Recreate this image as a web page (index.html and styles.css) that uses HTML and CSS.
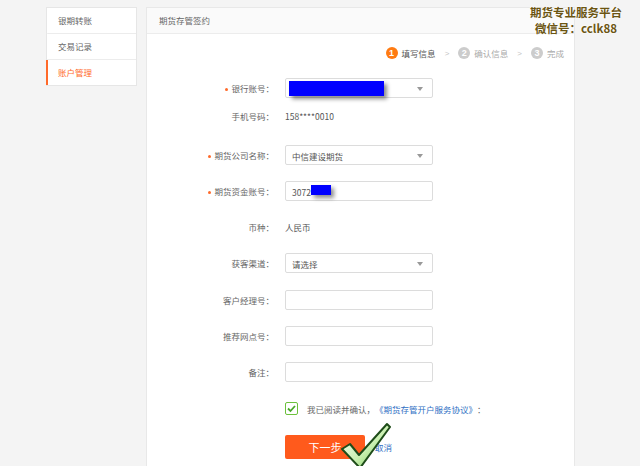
FILE: index.html
```html
<!DOCTYPE html>
<html lang="zh-CN">
<head>
  <meta charset="UTF-8">
  <title>期货存管签约</title>
  <link rel="stylesheet" href="styles.css">
</head>
<body>
  <div class="page">
    <!-- Sidebar -->
    <ul class="side-nav">
      <li>银期转账</li>
      <li>交易记录</li>
      <li class="active">账户管理</li>
    </ul>

    <!-- Main panel -->
    <div class="panel">
      <div class="panel-head">期货存管签约</div>

      <div class="steps">
        <span class="step current"><i>1</i>填写信息</span>
        <span class="arrow">&gt;</span>
        <span class="step"><i>2</i>确认信息</span>
        <span class="arrow">&gt;</span>
        <span class="step"><i>3</i>完成</span>
      </div>

      <div class="form">
        <div class="row">
          <label class="req">银行账号：</label>
          <div class="field select"><span class="mask mask-bank"></span></div>
        </div>
        <div class="row row-text tight">
          <label>手机号码：</label>
          <span class="value">158****0010</span>
        </div>
        <div class="row">
          <label class="req">期货公司名称：</label>
          <div class="field select">中信建设期货</div>
        </div>
        <div class="row">
          <label class="req">期货资金账号：</label>
          <div class="field">3072<span class="mask mask-acct"></span></div>
        </div>
        <div class="row row-text">
          <label>币种：</label>
          <span class="value">人民币</span>
        </div>
        <div class="row">
          <label>获客渠道：</label>
          <div class="field select">请选择</div>
        </div>
        <div class="row">
          <label>客户经理号：</label>
          <div class="field"></div>
        </div>
        <div class="row">
          <label>推荐网点号：</label>
          <div class="field"></div>
        </div>
        <div class="row">
          <label>备注：</label>
          <div class="field"></div>
        </div>
        <div class="row agree">
          <label></label>
          <div class="agree-box">
            <span class="checkbox">
              <svg width="11" height="11" viewBox="0 0 11 11"><path d="M2 5.5 L4.5 8 L9 3" fill="none" stroke="#4aa82a" stroke-width="1.8"/></svg>
            </span>
            我已阅读并确认，<a href="#">《期货存管开户服务协议》</a>：
          </div>
        </div>
        <div class="row actions">
          <label></label>
          <div class="btns">
            <button class="btn-next">下一步</button>
            <a href="#" class="cancel">取消</a>
          </div>
        </div>
      </div>

      <!-- big green tick stamped over the button -->
      <svg class="tick" width="52" height="48" viewBox="0 0 52 48">
        <defs>
          <linearGradient id="tg" x1="0" y1="0" x2="1" y2="1">
            <stop offset="0" stop-color="#ffffff"/>
            <stop offset="0.55" stop-color="#c9f0b0"/>
            <stop offset="1" stop-color="#5fbf3a"/>
          </linearGradient>
        </defs>
        <path d="M2 27 L10 22 L19 33 L47 2 L50 5 L20 46 Z" fill="url(#tg)" stroke="#1f4d1a" stroke-width="2" stroke-linejoin="round"/>
      </svg>
    </div>
  </div>

  <div class="watermark">
    <div>期货专业服务平台</div>
    <div>微信号：cclk88</div>
  </div>
</body>
</html>
```

FILE: styles.css
```css
/* General */
body {
  margin: 0;
  background-color: #f4f4f4;
  font-family: "Noto Sans CJK SC", "Noto Sans", sans-serif;
  font-size: 8.5px;
  color: #666;
  overflow: hidden;
}

.page {
  display: flex;
  gap: 9px;
  padding: 7px 0 0 46px;
  height: 459px;
}

/* Sidebar */
.side-nav {
  list-style: none;
  margin: 0;
  padding: 0;
  width: 91px;
  align-self: flex-start;
  background-color: #fff;
  border: 1px solid #e6e6e6;
  box-sizing: border-box;
}

.side-nav li {
  height: 25px;
  line-height: 25px;
  padding-left: 10px;
  border-bottom: 1px solid #ececec;
  color: #666;
  border-left: 2px solid transparent;
  margin-left: -1px;
}

.side-nav li:last-child {
  border-bottom: none;
}

.side-nav li.active {
  color: #ff6a2a;
  border-left-color: #ff6a2a;
}

/* Panel */
.panel {
  position: relative;
  width: 429px;
  background-color: #fff;
  border: 1px solid #e8e8e8;
  border-bottom: none;
  box-sizing: border-box;
}

.panel-head {
  height: 25px;
  line-height: 25px;
  padding-left: 12px;
  background-color: #fafafa;
  border-bottom: 1px solid #ececec;
  color: #666;
}

/* Steps */
.steps {
  display: flex;
  justify-content: flex-end;
  align-items: center;
  gap: 9px;
  padding: 12px 10px 0 0;
  height: 14px;
  color: #aaa;
}

.step {
  display: flex;
  align-items: center;
  gap: 4px;
}

.step i {
  width: 12px;
  height: 12px;
  border-radius: 50%;
  background-color: #ccc;
  color: #fff;
  font-style: normal;
  font-weight: bold;
  font-size: 9px;
  line-height: 12px;
  text-align: center;
  font-family: "Liberation Sans", sans-serif;
}

.step.current {
  color: #555;
}

.step.current i {
  background-color: #ff7b12;
}

.arrow {
  color: #c4c4c4;
  font-size: 8px;
  font-family: "Liberation Sans", sans-serif;
}

/* Form */
.form {
  display: flex;
  flex-direction: column;
  gap: 16.3px;
  margin-top: 18px;
}

.row {
  display: grid;
  grid-template-columns: 127px 148px;
  column-gap: 11px;
  align-items: center;
  height: 20px;
}

.row.tight {
  margin-top: -8px;
  margin-bottom: 2px;
}

.row label {
  text-align: right;
  color: #666;
}

.row label.req::before {
  content: "";
  display: inline-block;
  width: 3px;
  height: 3px;
  border-radius: 50%;
  background-color: #ff6a2a;
  margin-right: 3px;
  vertical-align: middle;
}

.value {
  color: #555;
}

.field {
  position: relative;
  height: 20px;
  line-height: 20px;
  border: 1px solid #dcdcdc;
  border-radius: 2px;
  box-sizing: border-box;
  padding-left: 6px;
  color: #555;
}

.field.select::after {
  content: "";
  position: absolute;
  right: 9px;
  top: 8px;
  border-left: 3.5px solid transparent;
  border-right: 3.5px solid transparent;
  border-top: 4px solid #999;
}

/* redaction blocks */
.mask {
  position: absolute;
  background-color: #0000ff;
  box-shadow: 3px 3px 4px rgba(0, 0, 0, 0.45);
}

.mask-bank {
  left: 3px;
  top: 2px;
  width: 95px;
  height: 15px;
}

.mask-acct {
  left: 25px;
  top: 3px;
  width: 20px;
  height: 10px;
}

/* Agreement */
.agree-box {
  display: flex;
  align-items: center;
  white-space: nowrap;
  color: #666;
}

.checkbox {
  display: flex;
  align-items: center;
  justify-content: center;
  width: 13px;
  height: 13px;
  border: 1.5px solid #6cc13c;
  border-radius: 2px;
  box-sizing: border-box;
  margin-right: 9px;
}

.agree-box a {
  color: #2f6fc4;
  text-decoration: none;
}

/* Buttons */
.row.actions {
  height: 24px;
}

.btns {
  display: flex;
  align-items: center;
  gap: 10px;
}

.btn-next {
  width: 80px;
  height: 24px;
  border: none;
  border-radius: 2px;
  background-color: #ff5a1c;
  color: #fff;
  font-family: inherit;
  font-size: 11px;
  padding: 0;
}

.cancel {
  color: #2f6fc4;
  text-decoration: none;
}

.tick {
  position: absolute;
  left: 193px;
  top: 414px;
}

/* Watermark */
.watermark {
  position: absolute;
  top: 4px;
  right: 18px;
  text-align: center;
  font-size: 11.5px;
  font-weight: bold;
  line-height: 16px;
  color: #6b5512;
  text-shadow: 0 0 2px #fff, 0 0 2px #fff;
}
```
